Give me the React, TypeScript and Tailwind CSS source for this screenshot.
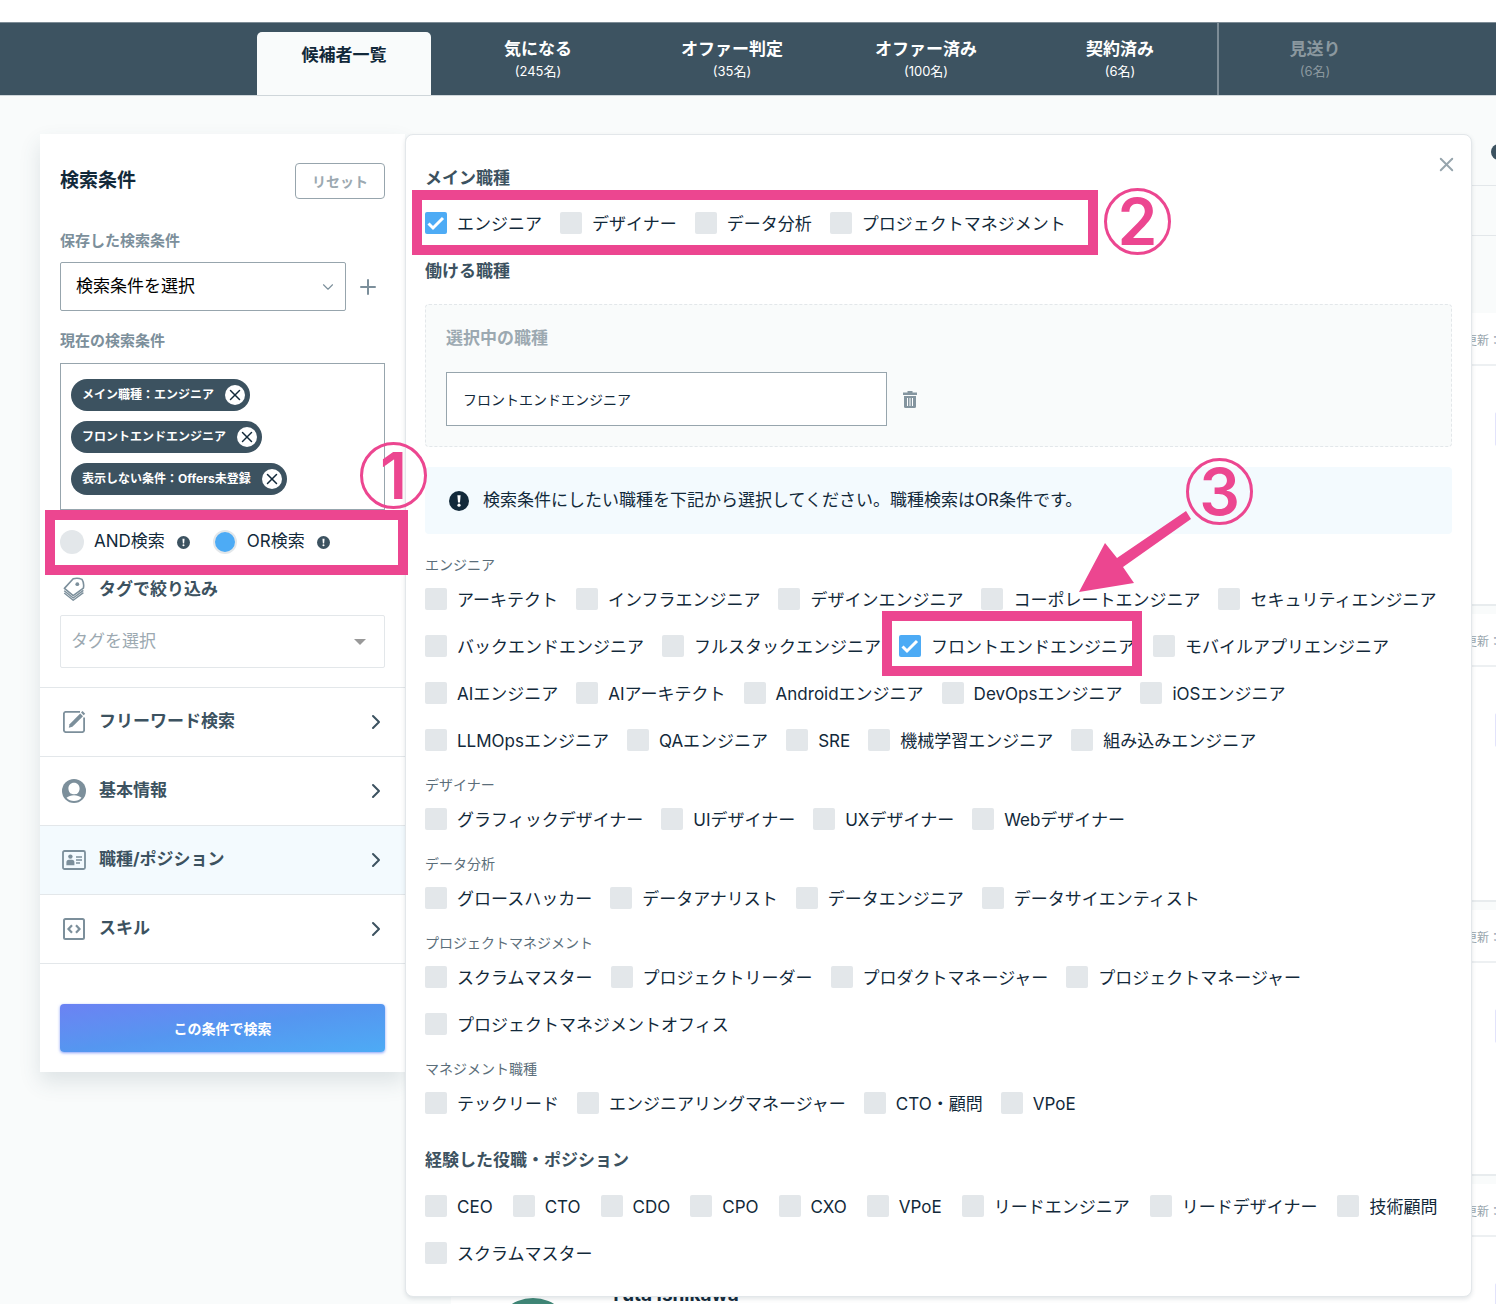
import { useId, useState } from "react";
import type { ReactNode } from "react";
import { ChevronDown, ChevronRight, Plus, X } from "lucide-react";

const tabs = [
  { label: "気になる", count: "(245名)" },
  { label: "オファー判定", count: "(35名)" },
  { label: "オファー済み", count: "(100名)" },
  { label: "契約済み", count: "(6名)" },
];

const mainJobs = ["エンジニア", "デザイナー", "データ分析", "プロジェクトマネジメント"];

const jobGroups = [
  {
    title: "エンジニア",
    items: [
      "アーキテクト",
      "インフラエンジニア",
      "デザインエンジニア",
      "コーポレートエンジニア",
      "セキュリティエンジニア",
      "バックエンドエンジニア",
      "フルスタックエンジニア",
      "フロントエンドエンジニア",
      "モバイルアプリエンジニア",
      "AIエンジニア",
      "AIアーキテクト",
      "Androidエンジニア",
      "DevOpsエンジニア",
      "iOSエンジニア",
      "LLMOpsエンジニア",
      "QAエンジニア",
      "SRE",
      "機械学習エンジニア",
      "組み込みエンジニア",
    ],
  },
  {
    title: "デザイナー",
    items: ["グラフィックデザイナー", "UIデザイナー", "UXデザイナー", "Webデザイナー"],
  },
  {
    title: "データ分析",
    items: ["グロースハッカー", "データアナリスト", "データエンジニア", "データサイエンティスト"],
  },
  {
    title: "プロジェクトマネジメント",
    items: [
      "スクラムマスター",
      "プロジェクトリーダー",
      "プロダクトマネージャー",
      "プロジェクトマネージャー",
      "プロジェクトマネジメントオフィス",
    ],
  },
  {
    title: "マネジメント職種",
    items: ["テックリード", "エンジニアリングマネージャー", "CTO・顧問", "VPoE"],
  },
];

const positions = [
  "CEO",
  "CTO",
  "CDO",
  "CPO",
  "CXO",
  "VPoE",
  "リードエンジニア",
  "リードデザイナー",
  "技術顧問",
  "スクラムマスター",
];

const chips = ["メイン職種：エンジニア", "フロントエンドエンジニア", "表示しない条件：Offers未登録"];

function InfoIcon({ className }: { className: string }) {
  return (
    <svg viewBox="0 0 20 20" className={`shrink-0 ${className}`} aria-hidden="true">
      <circle cx="10" cy="10" r="10" fill="currentColor" />
      <path d="M8.4 4.200h3.200l-.6 7.200H9z" fill="#fff" />
      <circle cx="10" cy="14.200" r="1.600" fill="#fff" />
    </svg>
  );
}

function TagsIcon() {
  return (
    <svg viewBox="0 0 24 24" className="size-6 shrink-0 text-[#7c8f9b]" fill="none" stroke="currentColor" strokeWidth="1.600" strokeLinejoin="round">
      <path d="M11.200 1.800C14 .9 17 1 20 2.400c1.700 2.600 2 5.600 1.400 8.800L11.200 18.600 2.400 11.400z" />
      <circle cx="15.300" cy="7.200" r="1.900" fill="currentColor" stroke="none" />
      <path d="m2.200 13.800 9 7.200 10.200-7.600" strokeWidth="1.400" />
      <path d="m2.200 16 9 7.200 10.200-7.600" strokeWidth="1.400" />
    </svg>
  );
}

function EditIcon() {
  return (
    <svg viewBox="0 0 24 24" className="size-6 shrink-0 text-[#7c8f9b]" fill="none" stroke="currentColor" strokeWidth="1.800">
      <path d="M18 1.900H3.500A2 2 0 0 0 1.900 3.500v17a2 2 0 0 0 1.600 1.600h17a2 2 0 0 0 1.600-1.600V7.500" />
      <path d="m6.800 17.800.8-3.600L18.200 3.400l2.800 2.800-10.600 10.600z" fill="currentColor" stroke="none" />
      <path d="m19 2.600 1.500-1.500 2.700 2.700-1.500 1.500z" fill="currentColor" stroke="none" />
    </svg>
  );
}

function UserIcon() {
  return (
    <svg viewBox="0 0 24 24" className="size-6 shrink-0 text-[#7c8f9b]">
      <circle cx="12" cy="12" r="12" fill="currentColor" />
      <path d="M12 3.800c3.400 0 5.600 2.500 5.600 5.700 0 2.200-1 4.200-2.500 5.200-.9.600-5.300.6-6.200 0-1.500-1-2.500-3-2.500-5.200 0-3.200 2.200-5.700 5.600-5.700z" fill="#fff" />
      <path d="M4.500 18.800c2-1.800 4.500-2.600 7.500-2.600s5.500.8 7.500 2.600A10.300 10.300 0 0 1 12 22a10.300 10.300 0 0 1-7.500-3.200z" fill="#fff" />
    </svg>
  );
}

function CardIcon() {
  return (
    <svg viewBox="0 0 24 24" className="size-6 shrink-0 text-[#7c8f9b]" fill="none" stroke="currentColor">
      <rect x="1" y="3" width="22" height="18" rx="1.500" strokeWidth="1.800" />
      <circle cx="8.400" cy="8.600" r="2.200" fill="currentColor" stroke="none" />
      <path d="M4.400 17.200v-3a2.500 2.500 0 0 1 2.500-2.500h3a2.500 2.500 0 0 1 2.500 2.500v3z" fill="currentColor" stroke="none" />
      <path d="M14 9h6M14 12h6M14 15h4" strokeWidth="1.500" />
    </svg>
  );
}

function CodeIcon() {
  return (
    <svg viewBox="0 0 24 24" className="size-6 shrink-0 text-[#7c8f9b]" fill="none" stroke="currentColor" strokeWidth="2">
      <rect x="2" y="2" width="20" height="20" rx="1.500" />
      <path d="M10 8.300 6.500 12l3.500 3.700M14 8.300 17.500 12 14 15.700" strokeWidth="2.200" />
    </svg>
  );
}

function TrashIcon() {
  return (
    <svg viewBox="0 0 14 17" className="h-[17px] w-[14px]" aria-hidden="true">
      <path d="M4.500 0h5v1.500H14V4H0V1.500h4.500z" fill="#84959f" />
      <path d="M1 5h12v10.500a1.500 1.500 0 0 1-1.500 1.500h-9A1.500 1.500 0 0 1 1 15.500z" fill="#84959f" />
      <path d="M4.500 7v8M7 7v8M9.500 7v8" stroke="#fff" strokeWidth="1" />
    </svg>
  );
}

const menu = [
  { label: "フリーワード検索", icon: <EditIcon />, active: false },
  { label: "基本情報", icon: <UserIcon />, active: false },
  { label: "職種/ポジション", icon: <CardIcon />, active: true },
  { label: "スキル", icon: <CodeIcon />, active: false },
];

function Check({ label, defaultChecked = false }: { label: string; defaultChecked?: boolean }) {
  const id = useId();
  return (
    <div className="flex h-[22px] items-center">
      <span className="relative size-[22px]">
        <input
          id={id}
          type="checkbox"
          defaultChecked={defaultChecked}
          className="peer block size-[22px] appearance-none rounded-[2px] bg-[#e3e7ea] checked:bg-[#4dabf5]"
        />
        <svg viewBox="0 0 22 22" className="pointer-events-none absolute inset-0 hidden peer-checked:block" fill="none" stroke="#fff" strokeWidth="3">
          <path d="m3.500 11.500 4.500 4.500L18 6" />
        </svg>
      </span>
      <label htmlFor={id} className="pt-px pl-[10px] text-[17px] leading-[22px] whitespace-nowrap">
        {label}
      </label>
    </div>
  );
}

function CheckList({ items, checked, gap = "gap-x-[18px]" }: { items: string[]; checked?: string; gap?: string }) {
  return (
    <div className={`flex flex-wrap gap-y-[25px] ${gap}`}>
      {items.map((item) => (
        <Check key={item} label={item} defaultChecked={item === checked} />
      ))}
    </div>
  );
}

function Heading({ children }: { children: ReactNode }) {
  return <h3 className="text-[17px] leading-6 font-bold text-[#3c5260]">{children}</h3>;
}

function Header() {
  return (
    <header className="mt-[22px] flex h-[74px] shrink-0 border-t border-b border-t-[#7d8c96] border-b-[#cfd6da] bg-[#3d5361] pl-[247px]">
      <a href="#list" className="mx-[10px] mt-[9px] flex w-[174px] shrink-0 justify-center rounded-t-[5px] bg-[#f9fbfb] pt-[11px] text-[17px] leading-6 font-bold text-[#12293a]">
        候補者一覧
      </a>
      {tabs.map((tab) => (
        <a key={tab.label} href="#list" className="flex w-[194px] shrink-0 flex-col items-center pt-[14px] text-white">
          <span className="text-[17px] leading-6 font-bold">{tab.label}</span>
          <span className="text-[13px] leading-5">{tab.count}</span>
        </a>
      ))}
      <a href="#list" className="flex w-[194px] shrink-0 flex-col items-center border-l-2 border-[#7d8c96] pt-[14px] text-[#8b989f]">
        <span className="text-[17px] leading-6 font-bold">見送り</span>
        <span className="text-[13px] leading-5">(6名)</span>
      </a>
    </header>
  );
}

function Sidebar() {
  const [mode, setMode] = useState("or");
  return (
    <aside className="w-[365px] shrink-0 self-start bg-white pb-5 shadow-[0_10px_20px_rgba(60,82,96,0.14)]">
      <div className="flex flex-col px-5 pt-[29px]">
        <div className="flex items-center justify-between">
          <h2 className="text-[19px] leading-[34px] font-bold">検索条件</h2>
          <button type="button" className="h-9 w-[90px] rounded-[4px] border border-[#97a5ad] text-[14px] font-bold text-[#9ca9b1]">
            リセット
          </button>
        </div>

        <label htmlFor="saved" className="mt-[30px] text-[15px] leading-6 font-bold text-[#7c8f9b]">
          保存した検索条件
        </label>
        <div className="mt-[9px] flex items-center">
          <div className="relative w-[286px]">
            <select id="saved" className="block h-[49px] w-full appearance-none rounded-[2px] border border-[#97a5ad] bg-white px-[15px] text-[17px] text-black">
              <option>検索条件を選択</option>
            </select>
            <ChevronDown size={18} strokeWidth={1.500} className="pointer-events-none absolute top-[16px] right-[9px] text-[#7c8f9b]" />
          </div>
          <button type="button" aria-label="追加" className="ml-[10px] text-[#7c8f9b]">
            <Plus size={24} strokeWidth={2} />
          </button>
        </div>

        <p className="mt-[18px] text-[15px] leading-6 font-bold text-[#7c8f9b]">現在の検索条件</p>
        <div className="mt-[10px] flex flex-col items-start gap-[10px] border border-[#97a5ad] px-[10px] pt-[15px] pb-[14px]">
          {chips.map((chip) => (
            <span key={chip} className="flex h-8 items-center gap-[11px] rounded-full bg-[#3c5260] pr-[5px] pl-[11px] text-[12px] font-bold text-white">
              {chip}
              <button type="button" aria-label="削除" className="flex size-5 items-center justify-center rounded-full bg-white text-[#12293a]">
                <X size={18} strokeWidth={2} />
              </button>
            </span>
          ))}
        </div>

        <div className="mt-5 flex h-6 items-center text-[17px]">
          <input
            id="and"
            type="radio"
            name="mode"
            checked={mode === "and"}
            onChange={() => setMode("and")}
            className="size-6 appearance-none rounded-full bg-[#e3e7ea] checked:border-2 checked:border-[#e3e7ea] checked:bg-[#4dabf5]"
          />
          <label htmlFor="and" className="pl-[10px]">AND検索</label>
          <InfoIcon className="ml-3 size-[13px] text-[#3c5260]" />
          <input
            id="or"
            type="radio"
            name="mode"
            checked={mode === "or"}
            onChange={() => setMode("or")}
            className="ml-[23px] size-6 appearance-none rounded-full bg-[#e3e7ea] checked:border-2 checked:border-[#e3e7ea] checked:bg-[#4dabf5]"
          />
          <label htmlFor="or" className="pl-[10px]">OR検索</label>
          <InfoIcon className="ml-3 size-[13px] text-[#3c5260]" />
        </div>

        <label htmlFor="tag" className="mt-[23px] flex items-center gap-[13px] pl-[2px] text-[17px] leading-6 font-bold text-[#3c5260]">
          <TagsIcon />
          タグで絞り込み
        </label>
        <div className="relative mt-[14px]">
          <select id="tag" className="block h-[53px] w-full appearance-none rounded-[2px] border border-[#e3e7ea] bg-white px-[10px] text-[17px] text-[#9ca9b1]">
            <option>タグを選択</option>
          </select>
          <svg viewBox="0 0 12 6" className="pointer-events-none absolute top-[24px] right-[19px] h-[6px] w-3">
            <path d="M0 0h12L6 6z" fill="#999" />
          </svg>
        </div>
      </div>

      <nav className="mt-[19px] border-t border-[#e3e7ea]">
        {menu.map((item) => (
          <button
            key={item.label}
            type="button"
            className={`flex h-[69px] w-full items-center border-b border-[#e3e7ea] pr-[17px] pl-[22px] text-[17px] font-bold text-[#3c5260] ${item.active ? "bg-[#f3fafe]" : ""}`}
          >
            {item.icon}
            <span className="flex-1 pl-[13px] text-left">{item.label}</span>
            <ChevronRight size={24} strokeWidth={2} />
          </button>
        ))}
      </nav>

      <div className="px-5 pt-10">
        <button type="button" className="h-12 w-full rounded-[4px] bg-linear-to-br from-[#6b82f3] via-[#5596f0] to-[#4dabf5] text-[14px] font-bold text-white shadow-[0_1px_3px_rgba(85,120,245,0.7)]">
          この条件で検索
        </button>
      </div>
    </aside>
  );
}

function Panel() {
  return (
    <section className="z-10 mr-6 self-start rounded-[8px] border border-[#e3e7ea] bg-white px-[19px] pt-[31px] pb-8 shadow-[0_2px_4px_rgba(60,82,96,0.15)] [grid-area:1/1]">
      <div className="flex items-start justify-between">
        <Heading>メイン職種</Heading>
        <button type="button" aria-label="閉じる" className="-mt-[13px] -mr-[6px] text-[#97a5ad]">
          <X size={23} strokeWidth={2} />
        </button>
      </div>
      <div className="mt-[22px]">
        <CheckList items={mainJobs} checked="エンジニア" />
      </div>

      <div className="mt-[25px]">
        <Heading>働ける職種</Heading>
      </div>
      <div className="mt-[21px] rounded-[4px] border border-dashed border-[#e3e7ea] bg-[#f9fbfb] px-5 pt-[21px] pb-5">
        <label htmlFor="selected" className="block text-[17px] leading-6 font-bold text-[#9ca9b1]">
          選択中の職種
        </label>
        <div className="mt-[22px] flex items-center gap-4">
          <input
            id="selected"
            type="text"
            defaultValue="フロントエンドエンジニア"
            className="h-[54px] w-[441px] border border-[#97a5ad] bg-white px-4 text-[14px]"
          />
          <button type="button" aria-label="削除">
            <TrashIcon />
          </button>
        </div>
      </div>

      <p className="mt-5 flex h-[67px] items-center gap-[14px] rounded-[4px] bg-[#f3fafe] pl-6 text-[17px]">
        <InfoIcon className="size-5 text-[#12293a]" />
        検索条件にしたい職種を下記から選択してください。職種検索はOR条件です。
      </p>

      <div className="mt-[21px] flex flex-col gap-6">
        {jobGroups.map((group) => (
          <div key={group.title}>
            <h4 className="mb-[13px] text-[14px] leading-5 text-[#5b6e7a]">{group.title}</h4>
            <CheckList items={group.items} checked="フロントエンドエンジニア" />
          </div>
        ))}
      </div>

      <div className="mt-[34px] mb-[23px]">
        <Heading>経験した役職・ポジション</Heading>
      </div>
      <CheckList items={positions} gap="gap-x-5" />
    </section>
  );
}

function ResultCard({ children, className }: { children?: ReactNode; className: string }) {
  return (
    <article className={`-mr-20 mb-2 shrink-0 border-b-2 border-[#e8ecee] bg-white ${className}`}>
      <div className="flex h-[53px] items-center justify-end border-b-2 border-[#edf0f2] pt-1 pr-[75px] text-[12px] text-[#97a5ad]">
        最終更新：
      </div>
      <div className="flex justify-between pt-[46px]">
        <div className="flex">{children}</div>
        <span className="h-[34px] w-[81px] rounded-[2px] bg-[#e2e3fb]" />
      </div>
    </article>
  );
}

// Candidate list that stays behind the open filter panel
function Results() {
  return (
    <section className="ml-[46px] flex min-w-0 flex-col overflow-hidden [grid-area:1/1]">
      <div className="-mr-20 flex h-[52px] shrink-0 justify-end border-b border-[#e3e7ea] pt-[10px] pr-[69px]">
        <InfoIcon className="size-4 text-[#3c5260]" />
      </div>
      <div className="-mr-20 mb-[77px] h-[50px] shrink-0 border-b border-[#e3e7ea]" />
      <ResultCard className="h-[293px]" />
      <ResultCard className="h-[288px]" />
      <ResultCard className="h-[266px]" />
      <ResultCard className="h-[300px]">
        <span className="mt-[15px] ml-[42px] size-20 rounded-full bg-[#3f8676]" />
        <span className="ml-[36px] text-[19px] leading-6 font-bold">Yuta Ishikawa</span>
      </ResultCard>
    </section>
  );
}

function Frame({ className }: { className: string }) {
  return <div className={`pointer-events-none absolute z-20 h-[65px] border-10 border-[#ec4690] ${className}`} />;
}

function Num({ n, className }: { n: number; className: string }) {
  return (
    <div className={`pointer-events-none absolute z-20 flex size-[67px] items-center justify-center rounded-full border-3 border-[#ec4690] text-[64px] leading-none font-semibold text-[#ec4690] ${className}`}>
      {n}
    </div>
  );
}

export default function App() {
  return (
    <div className="relative flex h-screen flex-col overflow-hidden bg-white font-[Inter,'Noto_Sans_CJK_JP',sans-serif] text-[#12293a]">
      <Header />
      <main className="flex min-h-0 flex-1 bg-[#f9fbfb] pt-[38px] pl-10">
        <Sidebar />
        <div className="grid min-w-0 flex-1 grid-cols-1">
          <Panel />
          <Results />
        </div>
      </main>

      {/* Step markers */}
      <Frame className="top-[510px] left-[45px] w-[363px]" />
      <Frame className="top-[190px] left-[412px] w-[686px]" />
      <Frame className="top-[611px] left-[882px] w-[260px]" />
      <Num n={1} className="top-[442px] left-[360px]" />
      <Num n={2} className="top-[188px] left-[1104px]" />
      <Num n={3} className="top-[458px] left-[1186px]" />
      <svg viewBox="0 0 112 82" className="pointer-events-none absolute top-[511px] left-[1079px] z-20 h-[82px] w-[112px]">
        <path d="M0 81 26 32l12 15L107 0l5 8-68 48 11 16z" fill="#ec4690" />
      </svg>
    </div>
  );
}
